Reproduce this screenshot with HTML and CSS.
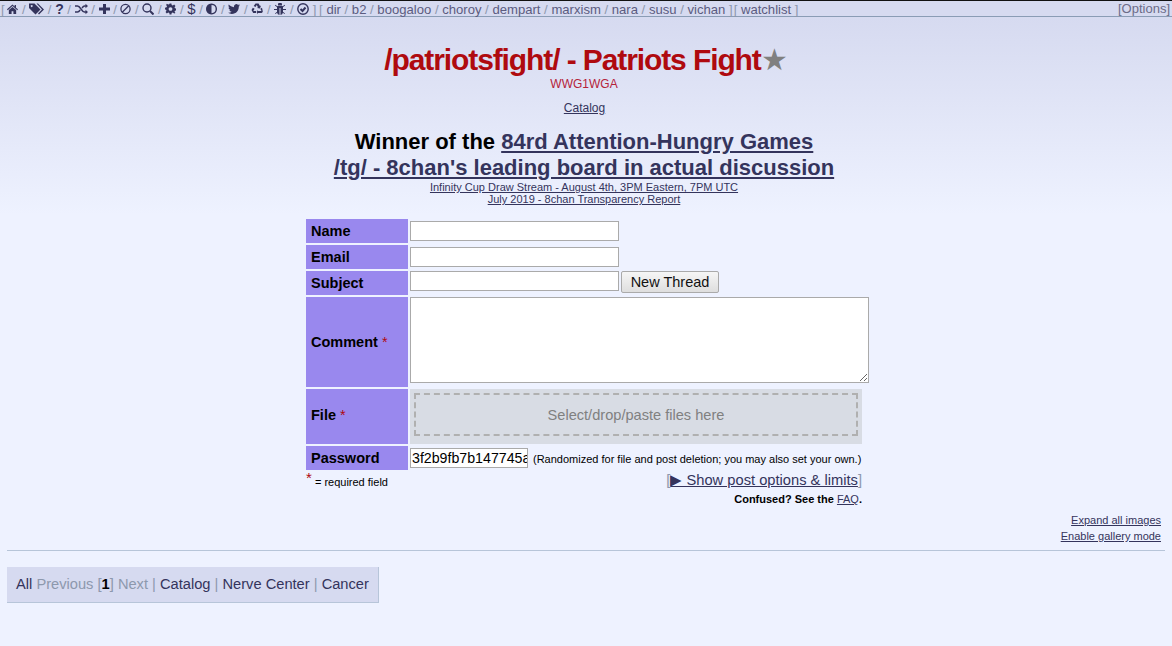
FILE: index.html
```html
<!DOCTYPE html>
<html lang="en">
<head>
    <meta charset="UTF-8">
    <meta name="viewport" content="width=device-width, initial-scale=1.0">
    <title>/patriotsfight/ - Patriots Fight</title>
    <link rel="stylesheet" href="styles.css">
</head>
<body>

    <!-- Top bar -->
    <div class="boardlist">
        <div class="board-links">
            <span class="sub icons">[
                <a href="#"><svg class="icon w11" viewBox="0 0 12 12"><path d="M6 1 0 6.400l.8.9L6 2.800l5.200 4.500.8-.9L9.800 4.500V1.500H8.300V3.200zM6 3.800 2 7.200V11.500h3V8.500h2v3h3V7.200z"/></svg></a> /
                <a href="#"><svg class="icon w15" viewBox="0 0 15 12"><path d="M0 .5h5.500l6 6-5 5-6.500-6.500zM2.700 2a1 1 0 1 0 .01 0zM7.500.5h1.500l6 6-5 5-1-1 4-4z"/></svg></a> /
                <a href="#" class="bold-glyph">?</a> /
                <a href="#"><svg class="icon w13 line" viewBox="0 0 13 12"><path d="M0 3h2.500c3 0 4 6 7 6h1.500M0 9h2.500c1.200 0 2-1 2.700-2M7 5c.7-1 1.500-2 2.500-2h1.500"/><path class="solid" d="M10.500 .8 13 3l-2.500 2.200zM10.500 6.800 13 9l-2.500 2.200z"/></svg></a> /
                <a href="#"><svg class="icon w11" viewBox="0 0 11 12"><path d="M4 1h3v3.500h4v3H7V11H4V7.500H0v-3h4z"/></svg></a> /
                <a href="#"><svg class="icon w11 line" viewBox="0 0 12 12"><circle cx="6" cy="6" r="5"/><path d="M2.500 9.500l7-7"/></svg></a> /
                <a href="#"><svg class="icon w12 line" viewBox="0 0 12 12"><circle cx="5" cy="5" r="4"/><path class="thick" d="M8 8l3.500 3.500"/></svg></a> /
                <a href="#"><svg class="icon w11" viewBox="0 0 12 12"><path fill-rule="evenodd" d="M5 0h2l.3 1.700 1.200.5L10 1.200l1.400 1.400-1 1.400.5 1.200 1.700.3v2l-1.700.3-.5 1.200 1 1.400L10 10.800l-1.500-1-1.200.5L7 12H5l-.3-1.700-1.200-.5-1.500 1L.6 9.400l1-1.400-.5-1.200L0 6.500v-2l1.700-.3.500-1.200-1-1.400L2 .2l1.500 1 1.200-.5zM6 4a2 2 0 1 0 .01 0z"/></svg></a> /
                <a href="#" class="bold-glyph dollar">$</a> /
                <a href="#"><svg class="icon w11" viewBox="0 0 12 12"><path fill-rule="evenodd" d="M6 0a6 6 0 1 0 .01 0zM6 1.500v9a4.500 4.500 0 0 0 0-9z"/></svg></a> /
                <a href="#"><svg class="icon w12" viewBox="0 0 24 24"><path d="M23.950 4.570a10 10 0 01-2.820.780 4.960 4.960 0 002.160-2.720c-.950.550-2 .950-3.120 1.180a4.920 4.920 0 00-8.380 4.480C7.690 8.100 4.070 6.130 1.640 3.160a4.820 4.820 0 00-.670 2.480c0 1.710.870 3.210 2.190 4.100a4.900 4.900 0 01-2.230-.620v.060a4.920 4.920 0 003.950 4.830 5 5 0 01-2.210.080 4.940 4.940 0 004.600 3.420A9.870 9.870 0 010 19.540a13.940 13.940 0 007.550 2.210c9.060 0 14-7.500 14-13.980 0-.210 0-.420-.010-.630A9.940 9.940 0 0024 4.590z"/></svg></a> /
                <a href="#"><svg class="icon w12" viewBox="0 0 12 12"><path d="M4.500.500h3l1.500 2.500 1-.6-1 3-3-.5 1-.6-1.300-2.200-1.200 2-1.800-1zM.5 7l1.300-2.300 1.800 1L2.300 8h2.700v2H2.200zM11.500 7l.3 2-1.200 1H7v1.300L5.500 9l1.500-2v1h3.500l-1.200-2.200 1.700-1z"/></svg></a> /
                <a href="#"><svg class="icon w12" viewBox="0 0 12 12"><path d="M4 1.500a2 2 0 0 1 4 0v1H4zM3.500 3h5L9 3.800V9.500a3 3 0 0 1-2.500 2.400V5h-1v6.900A3 3 0 0 1 3 9.500V3.800zM0 6h3v1H0zM9 6h3v1H9zM1.500 1.800l2 1.700-.6.600-2-1.700zM10.500 1.800l.6.600-2 1.700-.6-.6zM1 10.500l2-1.800.6.600-2 1.800zM11 10.500l-.6.600-2-1.800.6-.6z"/></svg></a> /
                <a href="#"><svg class="icon w12 line" viewBox="0 0 12 12"><circle cx="6" cy="6" r="5.200"/><path class="thick" d="M3.500 6l2 2 3-3.500"/></svg></a>
            ]</span>
            <span class="sub boards">[
                <a href="#">dir</a> /
                <a href="#">b2</a> /
                <a href="#">boogaloo</a> /
                <a href="#">choroy</a> /
                <a href="#">dempart</a> /
                <a href="#">marxism</a> /
                <a href="#">nara</a> /
                <a href="#">susu</a> /
                <a href="#">vichan</a>
            ]</span><span class="sub watch">[ <a href="#">watchlist</a> ]</span>
        </div>
        <a href="#" class="options">[Options]</a>
    </div>

    <header>
        <h1>/patriotsfight/ - Patriots Fight<span class="fav">★</span></h1>
        <div class="subtitle">WWG1WGA</div>
        <p class="catalog-link"><a href="#">Catalog</a></p>
    </header>

    <div class="blotter">
        <div class="big">Winner of the <a href="#">84rd Attention-Hungry Games</a></div>
        <div class="big"><a href="#">/tg/ - 8chan's leading board in actual discussion</a></div>
        <div class="small-link"><a href="#">Infinity Cup Draw Stream - August 4th, 3PM Eastern, 7PM UTC</a></div>
        <div class="small-link"><a href="#">July 2019 - 8chan Transparency Report</a></div>
    </div>

    <!-- Post form -->
    <form class="post-form" onsubmit="return false">
        <div class="row row-short">
            <label class="field-name">Name</label>
            <div class="field"><input type="text" class="text-input"></div>
        </div>
        <div class="row row-short">
            <label class="field-name">Email</label>
            <div class="field"><input type="text" class="text-input"></div>
        </div>
        <div class="row row-short">
            <label class="field-name">Subject</label>
            <div class="field"><input type="text" class="text-input"><button type="button" class="btn">New Thread</button></div>
        </div>
        <div class="row row-comment">
            <label class="field-name">Comment <span class="required">*</span></label>
            <div class="field"><textarea class="comment"></textarea></div>
        </div>
        <div class="row row-file">
            <label class="field-name">File <span class="required">*</span></label>
            <div class="dropzone-wrap"><div class="dropzone">Select/drop/paste files here</div></div>
        </div>
        <div class="row row-short">
            <label class="field-name">Password</label>
            <div class="field"><input type="text" class="password" value="3f2b9fb7b147745a"><span class="hint">(Randomized for file and post deletion; you may also set your own.)</span></div>
        </div>
        <div class="form-foot">
            <div class="req-note"><span class="required star">*</span> = required field</div>
            <div class="foot-right">
                <div class="show-options">[<a href="#">▶ Show post options &amp; limits</a>]</div>
                <div class="faq">Confused? See the <a href="#">FAQ</a>.</div>
            </div>
        </div>
    </form>

    <div class="thread-tools">
        <a href="#">Expand all images</a>
        <a href="#">Enable gallery mode</a>
    </div>

    <hr>

    <div class="pages">
        <a href="#">All</a> <span class="off">Previous</span> <span class="sep">[</span><a href="#" class="current">1</a><span class="sep">]</span> <span class="off">Next</span> <span class="sep">|</span> <a href="#">Catalog</a> <span class="sep">|</span> <a href="#">Nerve Center</a> <span class="sep">|</span> <a href="#">Cancer</a>
    </div>

</body>
</html>
```

FILE: styles.css
```css
html {
    height: 100%;
}

body {
    margin: 0;
    min-height: 646px;
    box-sizing: border-box;
    padding: 0 7px;
    overflow: hidden;
    font-family: "Liberation Sans", Arial, sans-serif;
    font-size: 13px;
    color: #000;
    background: #eef2ff linear-gradient(#d6daf0 17px, #eef2ff 215px) no-repeat;
}

a {
    color: #34345c;
}

/* Top bar */
.boardlist {
    display: flex;
    justify-content: space-between;
    height: 17px;
    margin: 0 -7px;
    padding: 0 2px 0 1px;
    box-sizing: border-box;
    border-top: 1px solid #111;
    border-bottom: 1px solid #8a9cb5;
    background: #d6daf0;
    font-size: 13.1px;
    line-height: 15px;
    color: #8d98ad;
    white-space: nowrap;
}

.boardlist a {
    color: #5c5c80;
    text-decoration: none;
}

.icons a:first-child {
    margin-left: -1px;
}

.boards {
    margin-left: -1px;
}

.watch {
    margin-left: 1px;
}

.boardlist .options {
    color: #6c6c88;
    font-size: 13px;
}

.icon {
    height: 12px;
    vertical-align: -1px;
    fill: #34345c;
}

.w11 { width: 11px; }
.w12 { width: 12px; }
.w13 { width: 13px; }
.w15 { width: 15px; }

.icon.line {
    fill: none;
    stroke: #34345c;
    stroke-width: 1.4;
}

.icon .solid {
    fill: #34345c;
    stroke: none;
}

.icon .thick {
    stroke-width: 2;
}

.boardlist .bold-glyph {
    color: #34345c;
    font-weight: bold;
    font-size: 14px;
}

.boardlist .dollar {
    font-weight: normal;
    font-size: 15px;
}

/* Board title */
header {
    text-align: center;
    padding-top: 26px;
}

h1 {
    margin: 0;
    font-size: 30px;
    line-height: 34px;
    letter-spacing: -1.1px;
    color: #af0a0f;
}

.fav {
    color: #808080;
    font-weight: normal;
    letter-spacing: 0;
    font-size: 30px;
    line-height: 30px;
}

.subtitle {
    margin: 1px 4px 0 0;
    font-size: 12px;
    line-height: 13px;
    color: #b5223a;
}

.catalog-link {
    margin: 10px 3px 0 0;
    font-size: 12px;
    line-height: 14px;
}

.blotter {
    text-align: center;
    margin: 14px 4px 0 0;
}

.big {
    font-size: 22px;
    font-weight: bold;
    line-height: 26px;
}

.small-link {
    font-size: 11px;
    line-height: 12px;
}

/* Post form */
.post-form {
    width: 563px;
    margin: 14px auto 0 299px;
}

.row {
    display: flex;
    gap: 2px;
    margin-bottom: 2px;
}

.row-short { height: 24px; }
.row-comment { height: 90px; }
.row-file { height: 55px; }

.field-name {
    display: flex;
    align-items: center;
    gap: 4px;
    flex: 0 0 97px;
    padding-left: 5px;
    background: #9988ee;
    font-size: 14.5px;
    font-weight: bold;
}

.row-file .field-name {
    padding-bottom: 3px;
}

.required {
    color: #af0a0f;
    font-weight: normal;
}

.field {
    display: flex;
    align-items: flex-start;
    gap: 2px;
}

.text-input {
    box-sizing: border-box;
    width: 209px;
    height: 20px;
    margin: 2px 0 0;
    padding: 0 2px;
    border: 1px solid #aaa;
    background: #fff;
}

.row:nth-child(3) .text-input {
    margin-top: 0;
}

.btn {
    box-sizing: border-box;
    width: 98px;
    height: 22px;
    margin: 0;
    padding: 0;
    border: 1px solid #aaa;
    border-radius: 2px;
    background: linear-gradient(#f6f6f6, #dedede);
    font-family: inherit;
    font-size: 14.5px;
    color: #111;
}

.comment {
    display: block;
    box-sizing: border-box;
    width: 459px;
    height: 86px;
    margin: 0;
    border: 1px solid #aaa;
    background: #fff;
}

.dropzone-wrap {
    box-sizing: border-box;
    width: 452px;
    padding: 4px;
    background: #d8dce4;
}

.dropzone {
    box-sizing: border-box;
    height: 43px;
    border: 2px dashed #b0b0b0;
    font-size: 14.6px;
    line-height: 40px;
    text-align: center;
    color: #808080;
}

.password {
    box-sizing: border-box;
    width: 118px;
    height: 20px;
    margin: 2px 0 0;
    padding: 0 0 0 1px;
    border: 1px solid #aaa;
    background: #fff;
    font-family: inherit;
    font-size: 14.2px;
}

.hint {
    margin: 6px 0 0 3px;
    font-size: 11px;
    line-height: 14px;
    white-space: nowrap;
}

.form-foot {
    display: flex;
    justify-content: space-between;
    width: 556px;
}

.req-note {
    padding-top: 1px;
    font-size: 11px;
    line-height: 16px;
}

.star {
    display: inline-block;
    font-size: 15px;
    vertical-align: 3px;
    line-height: 10px;
}

.foot-right {
    text-align: right;
}

.show-options {
    font-size: 14.7px;
    line-height: 17px;
    color: #8d98ad;
}

.faq {
    margin-top: 4px;
    font-size: 11px;
    font-weight: bold;
}

.faq a {
    font-weight: normal;
}

/* Thread tools */
.thread-tools {
    display: flex;
    flex-direction: column;
    align-items: flex-end;
    gap: 3px;
    margin: 9px 4px 0 0;
    font-size: 11px;
    line-height: 13px;
}

hr {
    height: 1px;
    margin: 7px 0 0;
    border: 0;
    background: #b7c5d9;
}

.pages {
    display: inline-block;
    margin-top: 16px;
    padding: 8px 9px;
    border-right: 1px solid #b7c5d9;
    border-bottom: 1px solid #b7c5d9;
    background: #d6daf0;
    font-size: 14.67px;
    line-height: 19px;
    color: #34345c;
}

.pages a {
    text-decoration: none;
}

.pages .current {
    color: #000;
    font-weight: bold;
}

.off {
    color: #8d98ad;
}

.sep {
    color: #8d98ad;
}
```
